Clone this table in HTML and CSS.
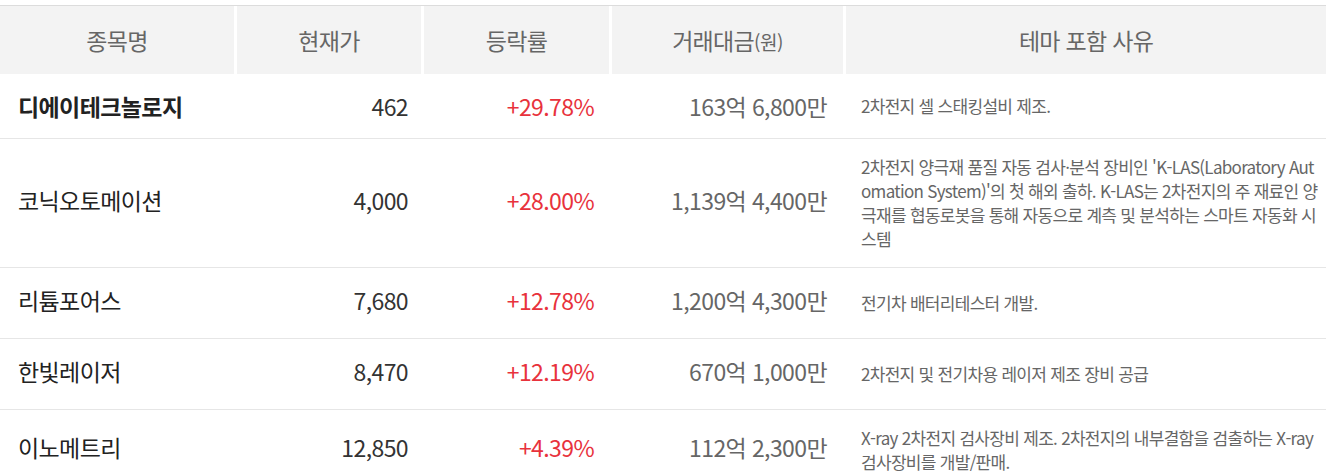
FILE: index.html
```html
<!DOCTYPE html>
<html lang="ko">
<head>
<meta charset="utf-8">
<link rel="stylesheet" href="styles.css">
</head>
<body>
<div class="wrap">
<table class="theme">
  <colgroup>
    <col class="c-name"><col class="c-price"><col class="c-rate"><col class="c-amt"><col class="c-desc">
  </colgroup>
  <thead>
    <tr>
      <th>종목명</th>
      <th>현재가</th>
      <th>등락률</th>
      <th>거래대금<span class="unit">(원)</span></th>
      <th>테마 포함 사유</th>
    </tr>
  </thead>
  <tbody>
    <tr class="r1">
      <td class="name bold">디에이테크놀로지</td>
      <td class="price">462</td>
      <td class="rate">+29.78%</td>
      <td class="amt">163억 6,800만</td>
      <td class="desc">2차전지 셀 스태킹설비 제조.</td>
    </tr>
    <tr>
      <td class="name">코닉오토메이션</td>
      <td class="price">4,000</td>
      <td class="rate">+28.00%</td>
      <td class="amt">1,139억 4,400만</td>
      <td class="desc">2차전지 양극재 품질 자동 검사·분석 장비인 'K-LAS(Laboratory Automation System)'의 첫 해외 출하. K-LAS는 2차전지의 주 재료인 양극재를 협동로봇을 통해 자동으로 계측 및 분석하는 스마트 자동화 시스템</td>
    </tr>
    <tr>
      <td class="name">리튬포어스</td>
      <td class="price">7,680</td>
      <td class="rate">+12.78%</td>
      <td class="amt">1,200억 4,300만</td>
      <td class="desc">전기차 배터리테스터 개발.</td>
    </tr>
    <tr>
      <td class="name">한빛레이저</td>
      <td class="price">8,470</td>
      <td class="rate">+12.19%</td>
      <td class="amt">670억 1,000만</td>
      <td class="desc">2차전지 및 전기차용 레이저 제조 장비 공급</td>
    </tr>
    <tr>
      <td class="name">이노메트리</td>
      <td class="price">12,850</td>
      <td class="rate">+4.39%</td>
      <td class="amt">112억 2,300만</td>
      <td class="desc">X-ray 2차전지 검사장비 제조. 2차전지의 내부결함을 검출하는 X-ray 검사장비를 개발/판매.</td>
    </tr>
  </tbody>
</table>
</div>
</body>
</html>
```
FILE: styles.css
```css
html, body {
  margin: 0;
  padding: 0;
  background: #fff;
}
body {
  font-family: "Noto Sans CJK KR", "Noto Sans", sans-serif;
  color: #333;
}
.wrap {
  padding-top: 5px;
}
.theme {
  width: 1326px;
  border-collapse: separate;
  border-spacing: 0;
  table-layout: fixed;
  border-top: 1px solid #dcdcdc;
}
.c-name { width: 234px; }
.c-price { width: 187px; }
.c-rate { width: 188px; }
.c-amt { width: 234px; }
.c-desc { width: 483px; }

.theme th {
  height: 68px;
  padding: 0;
  background: #f3f3f3;
  color: #666;
  font-weight: 400;
  font-size: 23px;
  letter-spacing: -0.7px;
  text-align: center;
  vertical-align: middle;
  border-left: 3px solid #fff;
}
.theme th:first-child { border-left: 0; }
.theme th .unit {
  font-size: 19px;
  letter-spacing: -0.5px;
}
.theme td {
  height: 71px;
  padding-top: 13px;
  padding-bottom: 19px;
  box-sizing: border-box;
  border-bottom: 1px solid #e6e6e6;
  vertical-align: middle;
  font-size: 23px;
  letter-spacing: -0.6px;
}
.theme tr.r1 td {
  height: 65px;
  padding-top: 14px;
  padding-bottom: 14px;
}
.theme td.name {
  padding-left: 18px;
  color: #222;
}
.theme td.bold { font-weight: 700; }
.theme td.price {
  text-align: right;
  padding-right: 13px;
  color: #333;
}
.theme td.rate {
  text-align: right;
  padding-right: 15px;
  color: #e8323c;
}
.theme td.amt {
  text-align: right;
  padding-right: 16px;
  color: #666;
}
.theme td.desc {
  padding-top: 16px;
  padding-bottom: 16px;
  padding-left: 18px;
  padding-right: 8px;
  font-size: 17px;
  line-height: 24px;
  letter-spacing: -0.7px;
  color: #666;
  word-break: break-all;
}
.theme tr.r1 td.desc {
  padding-top: 14px;
  padding-bottom: 14px;
}
```
